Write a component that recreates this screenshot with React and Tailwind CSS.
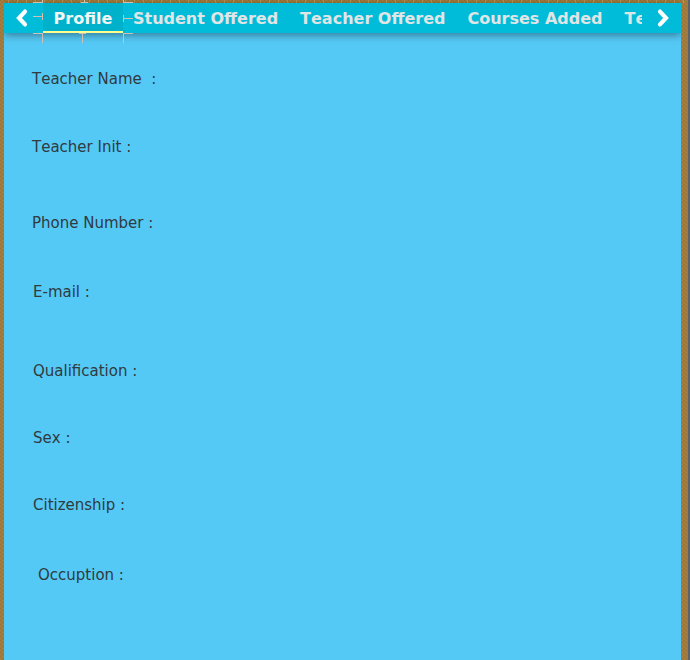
const tabs = ["Profile", "Student Offered", "Teacher Offered", "Courses Added", "Te"];

const fields = [
  { label: "Teacher Name  :", space: "mt-0" },
  { label: "Teacher Init :", space: "mt-12" },
  { label: "Phone Number :", space: "mt-14" },
  { label: "E-mail :", space: "mt-[49px] pl-px" },
  { label: "Qualification :", space: "mt-[59px] pl-px" },
  { label: "Sex :", space: "mt-[47px] pl-px" },
  { label: "Citizenship :", space: "mt-[47px] pl-px" },
  { label: "Occuption :", space: "mt-[50px] pl-1.5" },
];

function Chevron({ d }) {
  return (
    <svg width="14" height="20" viewBox="0 0 14 20" fill="none" stroke="white" strokeWidth="4.2" aria-hidden="true" strokeLinecap="round">
      <path d={d} />
    </svg>
  );
}

// Guide marks around the selected tab, as drawn by the layout designer.
function SelectionGuides() {
  return (
    <svg className="pointer-events-none absolute -top-[3px] left-[29px] z-10" width="104" height="46" viewBox="0 0 104 46" stroke="#cfc0b5" fill="none" aria-hidden="true" shapeRendering="crispEdges">
      <path d="M0 2.5H9M9.5 0V3M0 16.5H9M9.5 13V20M0 33.5H9M9.5 33V43" />
      <path d="M48 2.5H55M51.5 0V3M46 33.5H53M49.5 33V43" />
      <path d="M90.5 0V3M90 2.5H100M90.5 15V22M90 18.5H100M90.5 33V43M90 33.5H100" />
    </svg>
  );
}

function Frame() {
  return (
    <svg className="absolute inset-0 h-full w-full" aria-hidden="true">
      <defs>
        <pattern id="grain" width="4" height="4" patternUnits="userSpaceOnUse">
          <rect width="4" height="4" fill="#a27a3c" />
          <path d="M0 0h1v1H0zM2 2h1v1H2z" fill="#967238" />
          <path d="M2 0h1v1H2zM0 2h1v1H0z" fill="#a88243" />
        </pattern>
        <pattern id="ticks" width="9" height="3" patternUnits="userSpaceOnUse">
          <path d="M8 0h1v3H8z" fill="#bd9451" />
        </pattern>
      </defs>
      <rect width="100%" height="100%" fill="url(#grain)" />
      <rect width="100%" height="3" fill="url(#ticks)" />
    </svg>
  );
}

export default function App() {
  return (
    <div className="relative min-h-screen bg-[#5d6269] pr-0.5 font-['DejaVu_Sans',sans-serif] [font-kerning:none]">
      <div className="relative flex min-h-screen flex-col pt-[3px] pr-[7px] pl-1">
        <Frame />
        <div className="relative flex grow flex-col bg-[#54c9f5]">
          <header className="relative flex h-[30px] bg-[#00bcd8] shadow-[0_2px_8px_rgba(0,0,0,0.4)] [clip-path:inset(-3px_0_-14px_0)]">
            <button type="button" aria-label="Previous tabs" className="flex w-[39px] shrink-0 items-center pl-[11px]">
              <Chevron d="M10 3.6L4 10L10 16.4" />
            </button>
            <nav role="tablist" className="flex min-w-0 grow overflow-hidden">
              {tabs.map((tab, i) => (
                <button
                  key={tab}
                  type="button"
                  role="tab"
                  aria-selected={i === 0}
                  className={
                    i === 0
                      ? "flex w-20 shrink-0 items-center justify-center border-b-2 border-[#ffff8d] bg-[#00b1cb] pt-1 text-base font-bold whitespace-nowrap text-[#f0f7f5]"
                      : "mr-0.5 flex shrink-0 items-center justify-center px-2.5 pt-0.5 text-base font-bold whitespace-nowrap text-[#e0e5e6]"
                  }
                >
                  {tab}
                </button>
              ))}
            </nav>
            <button type="button" aria-label="Next tabs" className="flex w-[39px] shrink-0 items-center justify-end pr-[11px]">
              <Chevron d="M4 3.6L10 10L4 16.4" />
            </button>
            <SelectionGuides />
          </header>
          <main className="px-7 pt-9 text-[15px] leading-5 text-[#303a40]">
            <ul>
              {fields.map(({ label, space }) => (
                <li key={label} className={space}>
                  <span className="whitespace-pre">{label}</span>
                </li>
              ))}
            </ul>
          </main>
        </div>
      </div>
    </div>
  );
}
